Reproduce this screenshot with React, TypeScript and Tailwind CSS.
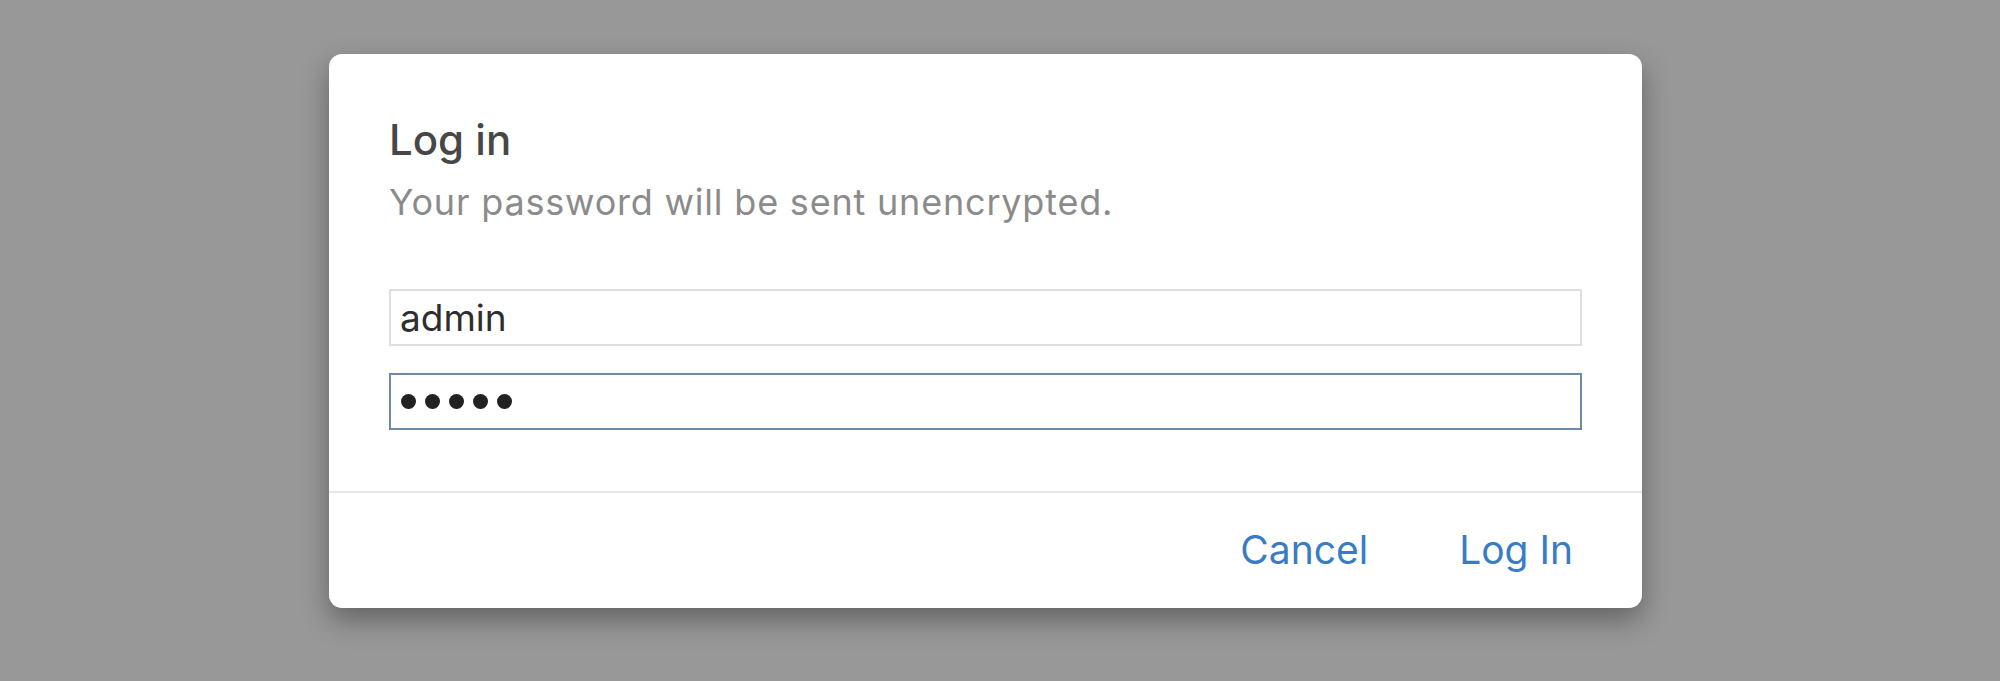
export default function App() {
  return (
    <div className="w-[2000px] h-[681px] bg-[#989898] pl-[329px] pt-[54px] font-['Inter',sans-serif]">
      <div className="w-[1313px] h-[554px] bg-white rounded-[13px] shadow-[0_12px_28px_rgba(0,0,0,0.35)] flex flex-col">
        <div className="h-[437px] px-[60px] pt-[60px]">
          <h1 className="text-[42px] leading-[52px] font-medium text-[#474747]">Log in</h1>
          <p className="mt-[14px] text-[36px] leading-[44px] tracking-[0.8px] text-[#8b8b8b]">
            Your password will be sent unencrypted.
          </p>
          <div className="mt-[65px] flex flex-col gap-[27px]">
            <div className="h-[57px] border-2 border-[#dedede] flex items-center px-[9px] text-[37px] text-[#2e2e2e]">
              admin
            </div>
            <div className="h-[57px] border-2 border-[#6f8aa6] flex items-center px-[10px] gap-[9px]">
              {Array.from({ length: 5 }).map((_, i) => (
                <span key={i} className="w-[15px] h-[15px] rounded-full bg-[#222]" />
              ))}
            </div>
          </div>
        </div>
        <div className="border-t-2 border-[#e6e6e6] flex-1 flex items-center justify-end pr-[69px] gap-[91px] text-[39px] text-[#3a7cc3]">
          <button>Cancel</button>
          <button>Log In</button>
        </div>
      </div>
    </div>
  );
}
